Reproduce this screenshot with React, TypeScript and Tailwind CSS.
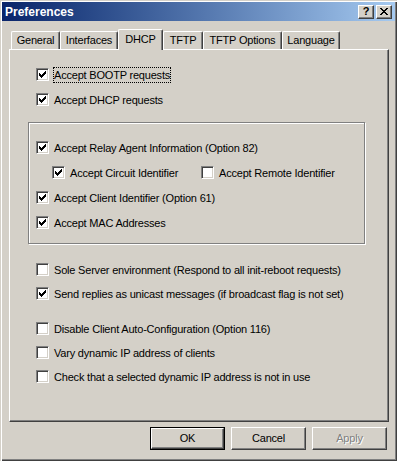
import React from 'react';

// classic 7x7 check glyph, one 3px column per x
const CHECK_COLS = [2, 3, 4, 3, 2, 1, 0];

function Box({ checked }: { checked?: boolean }) {
  return (
    <span className="w-[13px] h-[13px] shrink-0 bg-white border border-t-[#808080] border-l-[#808080] border-b-white border-r-white shadow-[inset_1px_1px_0_#404040,inset_-1px_-1px_0_#d4d0c8] flex items-center justify-center">
      {checked && (
        <svg width="7" height="7" viewBox="0 0 7 7" shapeRendering="crispEdges">
          {CHECK_COLS.map((y, x) => (
            <rect key={x} x={x} y={y} width="1" height="3" fill="#000" />
          ))}
        </svg>
      )}
    </span>
  );
}

function Row({ checked, label, focus, className = '' }: { checked?: boolean; label: string; focus?: boolean; className?: string }) {
  return (
    <div className={`flex items-center h-[15px] ${className}`}>
      <Box checked={checked} />
      <span className={`ml-[4px] h-[16px] leading-[14px] border whitespace-nowrap ${focus ? 'border-dotted border-black' : 'border-transparent'}`}>
        {label}
      </span>
    </div>
  );
}

const TABS = [
  { name: 'General', w: 'w-[49px]' },
  { name: 'Interfaces', w: 'w-[58px]' },
  { name: 'DHCP', w: 'w-[45px]', active: true },
  { name: 'TFTP', w: 'w-[40px]' },
  { name: 'TFTP Options', w: 'w-[79px]' },
  { name: 'Language', w: 'w-[58px]' },
];

export default function App() {
  return (
    <div className="w-[397px] h-[461px] bg-[#d4d0c8] p-[2px] text-[11px] tracking-[-0.2px] text-black font-['Liberation_Sans',Arial,sans-serif] shadow-[inset_1px_1px_0_#d4d0c8,inset_2px_2px_0_#fff,inset_-1px_-1px_0_#404040,inset_-2px_-2px_0_#808080] flex flex-col">
      {/* Title bar */}
      <div className="h-[19px] flex items-center bg-gradient-to-r from-[#0a246a] to-[#a6caf0] pl-[3px] pr-[3px]">
        <span className="text-white font-bold text-[12px] tracking-normal flex-1">Preferences</span>
        <div className="flex gap-[2px]">
          <div className="w-[16px] h-[14px] bg-[#d4d0c8] border border-t-white border-l-white border-b-[#404040] border-r-[#404040] shadow-[inset_-1px_-1px_0_#808080] flex items-center justify-center font-bold text-[11px] leading-none">
            ?
          </div>
          <div className="w-[16px] h-[14px] bg-[#d4d0c8] border border-t-white border-l-white border-b-[#404040] border-r-[#404040] shadow-[inset_-1px_-1px_0_#808080] flex items-center justify-center">
            <svg width="8" height="7" viewBox="0 0 8 7" shapeRendering="crispEdges">
              <path d="M0 0h2v1h-2zM6 0h2v1h-2zM1 1h2v1h-2zM5 1h2v1h-2zM2 2h4v1h-4zM3 3h2v1h-2zM2 4h4v1h-4zM1 5h2v1h-2zM5 5h2v1h-2zM0 6h2v1h-2zM6 6h2v1h-2z" fill="#000" />
            </svg>
          </div>
        </div>
      </div>

      {/* Tabs */}
      <div className="mt-[8px] ml-[9px] h-[20px] flex items-end relative z-10">
        {TABS.map(t => (
          <div
            key={t.name}
            className={`${t.w} bg-[#d4d0c8] border-l border-t border-r border-l-white border-t-white border-r-[#404040] shadow-[inset_-1px_0_0_#808080] rounded-t-[2px] flex items-center justify-center whitespace-nowrap ${t.active ? 'h-[21px] -mb-[1px] pb-[2px]' : 'h-[18px]'}`}
          >
            {t.name}
          </div>
        ))}
      </div>

      {/* Tab panel */}
      <div className="ml-[7px] w-[380px] h-[373px] border border-t-white border-l-white border-b-[#404040] border-r-[#404040] shadow-[inset_-1px_-1px_0_#808080] pt-[17px] pl-[26px] flex flex-col">
        <Row checked focus label="Accept BOOTP requests" />
        <Row checked label="Accept DHCP requests" className="mt-[10px]" />

        <div className="mt-[15px] -ml-[8px] w-[337px] h-[122px] border border-[#808080] shadow-[inset_1px_1px_0_#fff,1px_1px_0_#fff] pt-[17px] pl-[7px] flex flex-col">
          <Row checked label="Accept Relay Agent Information (Option 82)" />
          <div className="mt-[10px] ml-[16px] flex">
            <div className="w-[149px]">
              <Row checked label="Accept Circuit Identifier" />
            </div>
            <Row label="Accept Remote Identifier" />
          </div>
          <Row checked label="Accept Client Identifier (Option 61)" className="mt-[10px]" />
          <Row checked label="Accept MAC Addresses" className="mt-[10px]" />
        </div>

        <Row label="Sole Server environment (Respond to all init-reboot requests)" className="mt-[18px]" />
        <Row checked label="Send replies as unicast messages (if broadcast flag is not set)" className="mt-[9px]" />
        <Row label="Disable Client Auto-Configuration (Option 116)" className="mt-[20px]" />
        <Row label="Vary dynamic IP address of clients" className="mt-[9px]" />
        <Row label="Check that a selected dynamic IP address is not in use" className="mt-[9px]" />
      </div>

      {/* Buttons */}
      <div className="mt-[5px] pr-[8px] flex justify-end gap-[6px]">
        <div className="w-[75px] h-[23px] border border-black">
          <div className="w-full h-full border border-t-white border-l-white border-b-[#404040] border-r-[#404040] shadow-[inset_-1px_-1px_0_#808080] flex items-center justify-center">
            OK
          </div>
        </div>
        <div className="w-[75px] h-[23px] border border-t-white border-l-white border-b-[#404040] border-r-[#404040] shadow-[inset_-1px_-1px_0_#808080] flex items-center justify-center">
          Cancel
        </div>
        <div className="w-[75px] h-[23px] border border-t-white border-l-white border-b-[#404040] border-r-[#404040] shadow-[inset_-1px_-1px_0_#808080] flex items-center justify-center text-[#808080] [text-shadow:1px_1px_0_#fff]">
          Apply
        </div>
      </div>
    </div>
  );
}
